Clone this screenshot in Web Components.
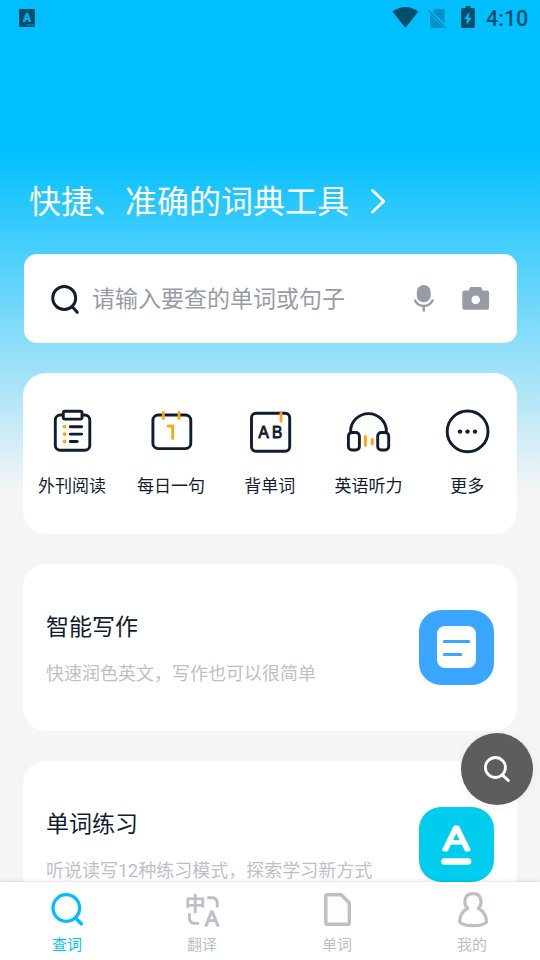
<!DOCTYPE html>
<html lang="zh-CN">
<head>
<meta charset="utf-8">
<title>词典</title>
<style>
html,body{margin:0;height:100%}
body{font-family:Roboto,"Noto Sans CJK SC",sans-serif;color:#101c30;overflow:hidden}
</style>
</head>
<body>
<dict-app></dict-app>
<script>
const define = (name, html) => {
  const t = document.createElement('template');
  t.innerHTML = html;
  customElements.define(name, class extends HTMLElement {
    constructor() {
      super();
      this.attachShadow({ mode: 'open' }).append(t.content.cloneNode(true));
    }
  });
};

// Each icon: [viewBox, markup]. Strokes use currentColor unless an accent is set.
const ICONS = {
  app: ['19 9 16 18', `<rect x="19" y="9" width="16" height="18" rx="1" fill="currentColor"/><text x="27" y="22" text-anchor="middle" font-size="12.500" font-weight="900" font-family="Roboto" fill="#02b4ef">A</text><path d="M27.3 24.900h6.600" style="stroke:#02a0d4" stroke-width="1.400" stroke-dasharray="1.700 .7" stroke-linecap="butt"/>`],
  wifi: ['392 6 27 23', `<path fill="currentColor" d="M405.400 28 392.400 11.500Q398.500 7 405.400 7T418.400 11.500Z"/>`],
  nosim: ['427 6 20 23', `<path fill="currentColor" d="M435 8h8.500q1.300 0 1.300 1.300V22.800L432.300 10.700ZM430 13 444 27H431.300Q430 27 430 25.700Z"/><path d="M428.300 9.300 446.200 27.300" style="stroke:currentColor" stroke-width="1.700" stroke-linecap="butt"/>`],
  battery: ['461 6 14 22', `<path fill="currentColor" fill-rule="evenodd" d="M465.700 6h4.800v2h3.300q1.200 0 1.200 1.200V26.800q0 1.200-1.200 1.200H462.200q-1.200 0-1.200-1.200V9.200Q461 8 462.200 8h3.500ZM469.500 11.800 464.200 19h3.100l-1.100 6.300 5.500-7.600h-3.200Z"/>`],
  chevron: ['366 186 22 30', `<path d="M372.500 190.500 383.800 201.200 372.500 212" stroke="#fff" stroke-width="2.900"/>`],
  search: ['48 281 34 34', `<circle cx="64.200" cy="297" r="11.500" stroke-width="2.900"/><path d="M73 306.500 77.200 311.300" stroke-width="3"/>`],
  mic: ['412 283 24 31', `<rect x="416.800" y="285" width="13.900" height="17.300" rx="6.900" fill="currentColor" stroke="none"/><path d="M415 300.500Q418 306 423.800 306T432.600 300.500M423.800 306.500V310.500" stroke-width="2.500"/>`],
  camera: ['461 285 30 27', `<path fill="currentColor" fill-rule="evenodd" stroke="none" d="M471.300 287h8.700q1.300 0 1.700 1.300l.8 2.200h4.200q2.400 0 2.400 2.400v14.600q0 2.300-2.400 2.300h-22q-2.400 0-2.400-2.300V292.900q0-2.400 2.400-2.400h4.100l.8-2.200q.4-1.300 1.700-1.300ZM475.700 295.500a4.300 4.300 0 1 0 .01 0Z"/>`],
  reading: ['47 406 50 50', `<g stroke-width="2.900"><rect x="55.300" y="415" width="34.500" height="35.300" rx="5"/><rect x="63.300" y="411.300" width="18.700" height="7.800" rx="1.500" fill="#fff"/><path d="M70.300 426.700H81.700M70.300 434.100H81.700M70.300 441.500H77.200"/></g><g fill="#ffa50a" stroke="none"><circle cx="64.600" cy="426.600" r="1.900"/><circle cx="64.600" cy="434.100" r="1.900"/><circle cx="64.600" cy="441.500" r="1.900"/></g>`],
  daily: ['146 406 50 50', `<rect x="152.900" y="415" width="37.900" height="33.600" rx="5.300" stroke-width="2.900"/><path stroke="#ffa50a" stroke-width="2.900" d="M163.300 412.500V418.600M179 412.500V418.600"/><path stroke="#ffa50a" stroke-width="2.800" stroke-linejoin="miter" d="M168.300 426.200H172.700V438.600"/>`],
  words: ['245 406 50 50', `<rect x="251.500" y="413.200" width="38.200" height="38" rx="4.500" stroke-width="2.900"/><path stroke="#ffa50a" stroke-width="2.800" d="M281 413.300V421.300"/><text x="258 271.800" y="438.300" font-size="16.200" font-family="Inter" font-weight="400" fill="currentColor" stroke-width=".8">AB</text>`],
  listen: ['344 406 50 50', `<g stroke-width="2.900"><path d="M350.600 432V431.500A17.900 17.900 0 0 1 386.400 431.500V432"/><rect x="348.400" y="432.500" width="11" height="17.500" rx="3.600"/><rect x="377.700" y="432.500" width="11" height="17.500" rx="3.600"/></g><path stroke="#ffa50a" stroke-width="2.900" d="M365.400 436.400V445.600M372.300 439.400V444"/>`],
  more: ['443 406 50 50', `<circle cx="467.600" cy="431.400" r="20.400" stroke-width="2.900"/><g fill="currentColor" stroke="none"><circle cx="460" cy="431.600" r="2.200"/><circle cx="467.500" cy="431.600" r="2.200"/><circle cx="475" cy="431.600" r="2.200"/></g>`],
  writing: ['419 610 75 75', `<rect x="419" y="610" width="75" height="75" rx="22" fill="#3aa6ff" stroke="none"/><rect x="437" y="626" width="39" height="42" rx="8" fill="#fff" stroke="none"/><path stroke="#3aa6ff" stroke-width="3" d="M444.300 641.500H468.700M444.300 654.500H460.700"/>`],
  practice: ['419 807 75 75', `<rect x="419" y="807" width="75" height="75" rx="22" fill="#00cdee" stroke="none"/><text transform="translate(456.200 850.300) scale(1.320 1)" text-anchor="middle" font-size="31" font-family="Inter" font-weight="200" fill="#fff" stroke="#fff" stroke-width="2.900">A</text><path stroke="#fff" stroke-width="6.600" d="M444.400 861.500H468"/>`],
  fab: ['461 733 72 72', `<circle cx="495.400" cy="767.500" r="10" stroke-width="2.800"/><path stroke-width="3" d="M503 775.500 508.300 780.500"/>`],
  navsearch: ['48 890 40 40', `<circle cx="66.300" cy="908" r="13.300" stroke-width="3.300"/><path stroke-width="3.600" d="M76 918.500 81.300 923.800"/>`],
  translate: ['183 890 40 40', `<text transform="translate(195.300 910.800) scale(1 .93)" text-anchor="middle" font-size="20.500" font-weight="400" font-family="Noto Sans CJK SC" fill="currentColor" stroke-width="1">中</text><path stroke-width="2.900" d="M208.500 897.800H212Q217.200 897.800 217.200 903V906.300M189.400 914.500V917.500Q189.400 923.400 195 923.400H198"/><text transform="translate(212 925.600) scale(1.080 1)" text-anchor="middle" font-size="20.300" font-family="Inter" font-weight="300" fill="currentColor" stroke-width="1.300">A</text>`],
  doc: ['318 890 40 40', `<path stroke-width="3.400" d="M327.500 894.700H341.300L349.300 903V922.800Q349.300 924.300 347.800 924.300H327.300Q325.800 924.300 325.800 922.800V896.300Q325.800 894.700 327.500 894.700Z"/>`],
  me: ['453 890 40 40', `<path stroke-width="3.200" d="M467.700 908.300C463.300 904.500 463.500 893.700 473 893.700S482.500 904.500 478.300 908.300C483.500 911 486.500 916 486.500 922Q483 925.700 473 925.700T459.700 922C459.700 916 462.500 911 467.700 908.300Z"/>`]
};

customElements.define('dict-icon', class extends HTMLElement {
  connectedCallback() {
    const name = this.getAttribute('name');
    const [box, body] = ICONS[name];
    const [, , w, h] = box.split(' ');
    const solid = ['app', 'wifi', 'nosim', 'battery'].includes(name);
    this.attachShadow({ mode: 'open' }).innerHTML =
      `<style>:host{display:block;flex:none;width:${w}px;height:${h}px}svg{display:block;overflow:visible}</style>
       <svg width="${w}" height="${h}" viewBox="${box}" fill="none" stroke-linecap="round" stroke-linejoin="round"><g stroke="${solid ? 'none' : 'currentColor'}">${body}</g></svg>`;
  }
});

define('dict-status', `<style>
:host{display:flex;height:36px;padding:0 12px 0 19px;box-sizing:border-box;align-items:center;color:#004f6a}
.sp{flex:1}.sim{color:#0292c4;margin:0 14px 0 8px}
b{font:500 21.500px/36px Roboto,sans-serif;margin-left:11px;padding-top:2px;width:42px;white-space:nowrap}
dict-icon{margin-top:-2px}dict-icon[name=app]{margin-top:0}
</style><dict-icon name="app"></dict-icon><span class="sp"></span><dict-icon name="wifi"></dict-icon><dict-icon class="sim" name="nosim"></dict-icon><dict-icon name="battery"></dict-icon><b>4:10</b>`);

define('dict-headline', `<style>
:host{display:flex;height:60px;align-items:center;color:#fff;font-size:32px;line-height:60px;padding-left:6px;gap:17px}
span{padding-top:2px}
</style><span><slot></slot></span><dict-icon name="chevron"></dict-icon>`);

define('dict-search', `<style>
:host{display:flex;box-sizing:border-box;height:89px;margin-left:1px;padding:0 26px 0 24px;align-items:center;background:#fff;border-radius:13px;font-size:23px;line-height:34px}
span{flex:1;margin-left:10px;padding-top:2px;color:#979ba6}.g{color:#979ba6}.c{margin-left:25px}
</style><dict-icon name="search"></dict-icon><span><slot></slot></span><dict-icon class="g" name="mic"></dict-icon><dict-icon class="g c" name="camera"></dict-icon>`);

define('dict-shortcuts', `<style>
:host{display:grid;grid-template-columns:repeat(5,1fr);box-sizing:border-box;height:161px;padding-top:33px;background:#fff;border-radius:23px}
</style><slot></slot>`);

define('dict-shortcut', `<style>
:host{display:flex;flex-direction:column;align-items:center;gap:17px;font-size:17px;line-height:26px}
span{padding-right:.6px}
</style><slot name="icon"></slot><span><slot></slot></span>`);

define('dict-card', `<style>
:host{display:flex;box-sizing:border-box;height:167px;padding:0 23px;align-items:center;justify-content:space-between;background:#fff;border-radius:23px}
.t{font-size:23px;line-height:34px;padding-top:3px}.d{font-size:18px;line-height:28px;margin-top:15px;color:#bcbfc8}
</style><div><div class="t"><slot name="title"></slot></div><div class="d"><slot></slot></div></div><slot name="icon"></slot>`);

define('dict-tabs', `<style>
:host{display:grid;grid-template-columns:repeat(4,1fr);height:78px;background:#fff;box-shadow:0 -1px 3px rgba(0,0,0,.12);position:relative;z-index:1}
</style><slot></slot>`);

define('dict-tab', `<style>
:host{display:flex;flex-direction:column;align-items:center;padding-top:8px;gap:4px;color:#bcbfc6;font-size:15px;line-height:22px}
:host([active]){color:#00bfff}
span{padding-right:1px}
</style><slot name="icon"></slot><span><slot></slot></span>`);

define('dict-fab', `<style>
:host{position:absolute;right:7px;top:733px;width:72px;height:72px;border-radius:50%;background:#5d5d5d;color:#fff;box-shadow:0 1px 8px rgba(0,0,0,.06);z-index:2}
</style><dict-icon name="fab"></dict-icon>`);

define('dict-app', `<style>
:host{display:flex;flex-direction:column;position:relative;width:540px;height:960px;overflow:hidden;background:linear-gradient(#00bfff 150px,#f5f5f5 490px)}
main{flex:1;min-height:0;overflow:hidden;display:flex;flex-direction:column;padding:135px 23px 0}
main>*{flex:none}
dict-search{margin-top:23px}dict-shortcuts,dict-card{margin-top:30px}
</style>
<dict-status></dict-status>
<main>
<dict-headline>快捷、准确的词典工具</dict-headline>
<dict-search>请输入要查的单词或句子</dict-search>
<dict-shortcuts>
<dict-shortcut><dict-icon slot="icon" name="reading"></dict-icon>外刊阅读</dict-shortcut>
<dict-shortcut><dict-icon slot="icon" name="daily"></dict-icon>每日一句</dict-shortcut>
<dict-shortcut><dict-icon slot="icon" name="words"></dict-icon>背单词</dict-shortcut>
<dict-shortcut><dict-icon slot="icon" name="listen"></dict-icon>英语听力</dict-shortcut>
<dict-shortcut><dict-icon slot="icon" name="more"></dict-icon>更多</dict-shortcut>
</dict-shortcuts>
<dict-card><span slot="title">智能写作</span>快速润色英文，写作也可以很简单<dict-icon slot="icon" name="writing"></dict-icon></dict-card>
<dict-card><span slot="title">单词练习</span>听说读写12种练习模式，探索学习新方式<dict-icon slot="icon" name="practice"></dict-icon></dict-card>
</main>
<dict-tabs>
<dict-tab active><dict-icon slot="icon" name="navsearch"></dict-icon>查词</dict-tab>
<dict-tab><dict-icon slot="icon" name="translate"></dict-icon>翻译</dict-tab>
<dict-tab><dict-icon slot="icon" name="doc"></dict-icon>单词</dict-tab>
<dict-tab><dict-icon slot="icon" name="me"></dict-icon>我的</dict-tab>
</dict-tabs>
<dict-fab></dict-fab>`);
</script>
</body>
</html>
